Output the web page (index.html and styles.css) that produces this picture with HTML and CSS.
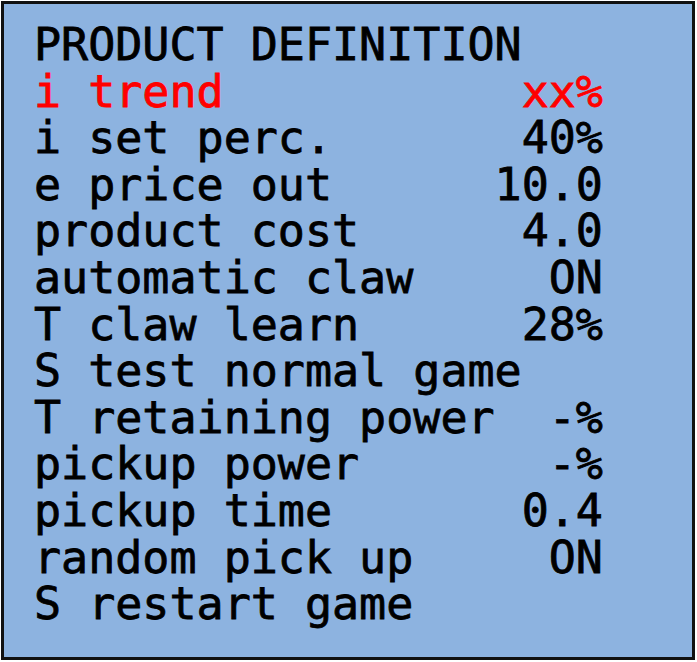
FILE: index.html
```html
<!DOCTYPE html>
<html lang="en">
<head>
    <meta charset="UTF-8">
    <meta name="viewport" content="width=device-width, initial-scale=1.0">
    <title>Product Definition</title>
    <link rel="stylesheet" href="styles.css">
</head>
<body>
    <div class="panel">
        <div class="title">PRODUCT DEFINITION</div>
        <ul class="menu">
            <li class="item selected"><span>i trend</span><span>xx%</span></li>
            <li class="item"><span>i set perc.</span><span>40%</span></li>
            <li class="item"><span>e price out</span><span>10.0</span></li>
            <li class="item"><span>product cost</span><span>4.0</span></li>
            <li class="item"><span>automatic claw</span><span>ON</span></li>
            <li class="item"><span>T claw learn</span><span>28%</span></li>
            <li class="item"><span>S test normal game</span></li>
            <li class="item"><span>T retaining power</span><span>-%</span></li>
            <li class="item"><span>pickup power</span><span>-%</span></li>
            <li class="item"><span>pickup time</span><span>0.4</span></li>
            <li class="item"><span>random pick up</span><span>ON</span></li>
            <li class="item"><span>S restart game</span></li>
        </ul>
    </div>
</body>
</html>
```

FILE: styles.css
```css
body {
    margin: 0;
    padding: 0;
    background-color: white;
}
.panel {
    box-sizing: border-box;
    width: 694px;
    height: 659px;
    margin: 1px;
    padding: 18px 0 0 30px;
    background-color: #8db3e0;
    border: 3px solid #111;
    font-family: "DejaVu Sans Mono", monospace;
    font-size: 45px;
    line-height: 46.6px;
    color: #000;
    -webkit-text-stroke: 0.8px currentColor;
}
.title {
    width: 21ch;
    white-space: pre;
}
.menu {
    list-style-type: none;
    margin: 0;
    padding: 0;
}
.item {
    display: flex;
    justify-content: space-between;
    width: 21ch;
    white-space: pre;
}
.item.selected {
    color: #ff0000;
}
```
